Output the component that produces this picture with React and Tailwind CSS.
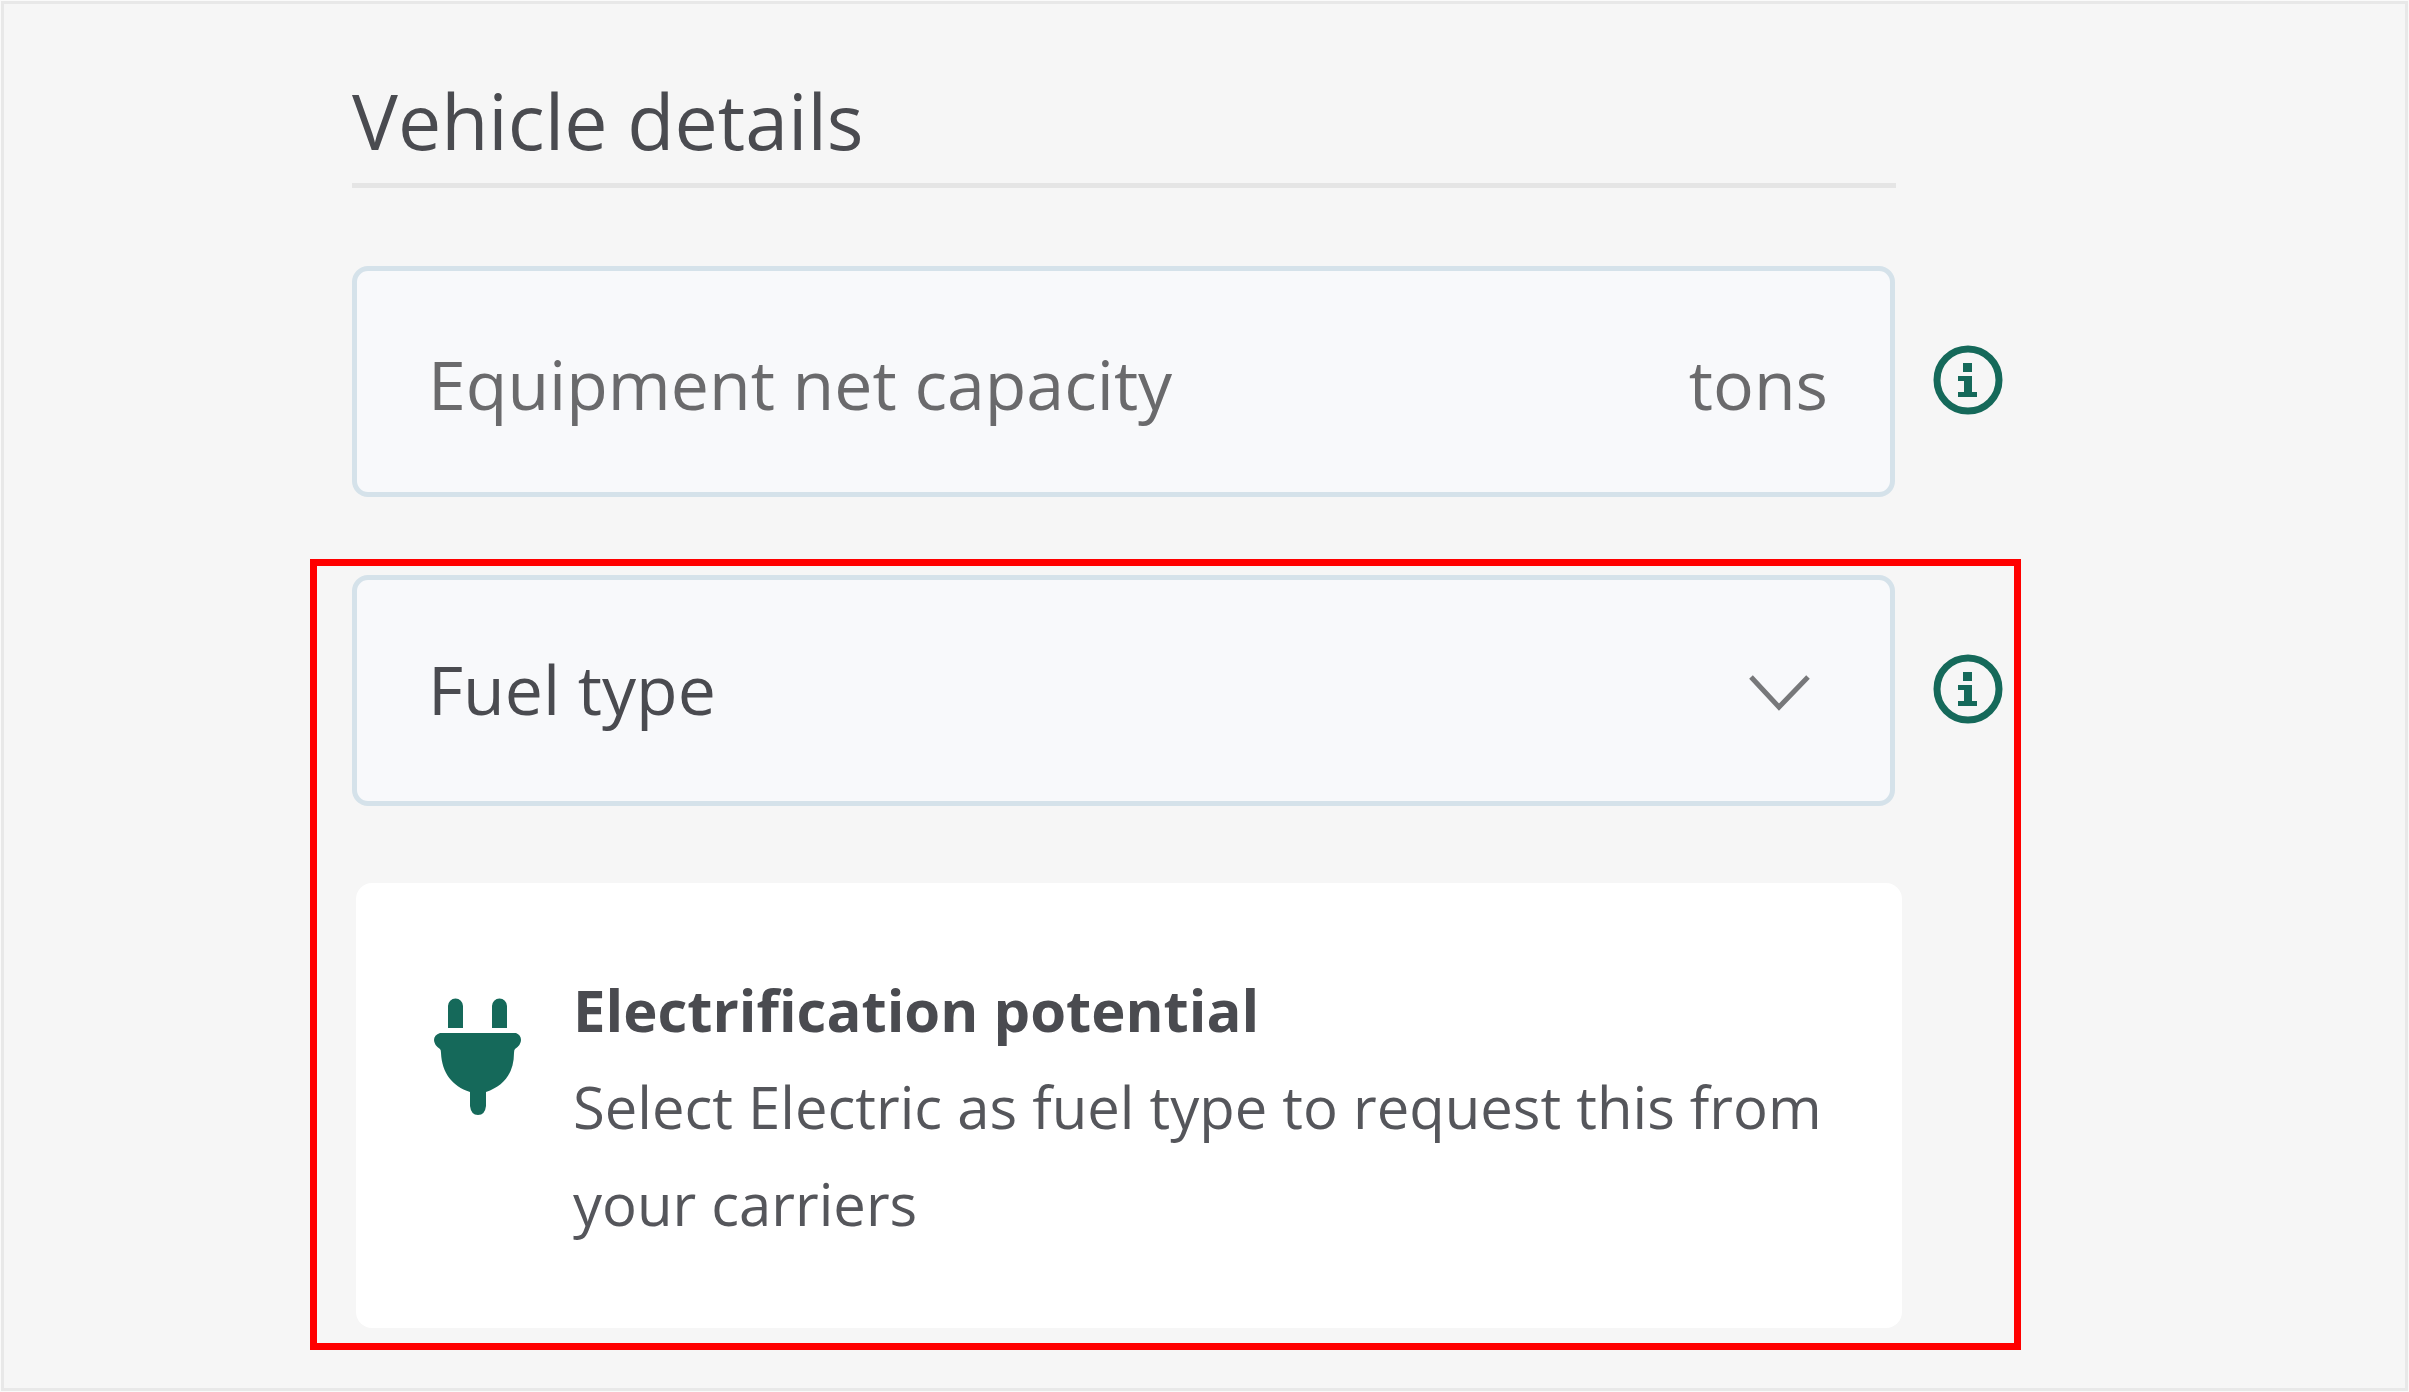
import { useState } from 'react';

const fuelTypes = ['Diesel', 'Electric', 'Hybrid', 'Biodiesel'];

function InfoIcon() {
  return (
    <svg viewBox="0 0 70 70" className="size-[70px]" fill="none" aria-hidden="true">
      <circle cx="35" cy="35" r="31" stroke="#15695a" strokeWidth="7" />
      <path d="M30 18h9v9h-9zM25 31h14v16h5v5H25v-5h6V36h-6z" fill="#15695a" />
    </svg>
  );
}

function PlugIcon() {
  return (
    <svg viewBox="0 0 88 118" className="mt-9 h-[118px] w-[88px] shrink-0" fill="#15695a" aria-hidden="true">
      <path d="M14 31V9a7 7 0 0 1 15 0v22zM58 31V9a7 7 0 0 1 15 0v22z" />
      <path d="M6 36h76q5 2 5 7t-6 9q-1 1-1 4c0 20-10 33-28 39v14q-1 9-8 9t-8-9V95C18 89 8 76 7 56q0-3-1-4-6-4-6-9t6-7z" />
    </svg>
  );
}

function InfoButton({ label }) {
  return (
    <button type="button" aria-label={label} className="shrink-0 pb-1">
      <InfoIcon />
    </button>
  );
}

export default function App() {
  const [capacity, setCapacity] = useState('');
  const [fuel, setFuel] = useState('');

  return (
    <div className="min-h-screen bg-[#fafafa] p-px flex font-['Open_Sans',sans-serif]">
      <main className="flex-1 border-3 border-[#e8e8e8] bg-[#f6f6f6] pt-[68px] pl-[306px] pr-[384px] pb-9">
        <div className="pl-[42px] pr-[125px]">
          <h1 className="border-b-5 border-[#e5e5e5] pt-px pb-[14px] text-[77px] leading-[96px] text-[#4a4b50]">
            Vehicle details
          </h1>
        </div>

        <div className="mt-[78px] flex items-center gap-[38px] pl-[42px] pr-[18px]">
          <div className="flex h-[231px] min-w-0 flex-1 items-center rounded-2xl border-5 border-[#d5e2ea] bg-[#f8f9fb] pt-1 pl-[71px] pr-[62px] text-[68px] leading-[96px] text-[#6a6a6c]">
            <input
              type="text"
              aria-label="Equipment net capacity"
              value={capacity}
              onChange={(e) => setCapacity(e.target.value)}
              placeholder="Equipment net capacity"
              className="h-24 min-w-0 flex-1 bg-transparent outline-none placeholder:text-[#6a6a6c]"
            />
            <span>tons</span>
          </div>
          <InfoButton label="About equipment net capacity" />
        </div>

        <section className="mt-[62px] border-7 border-[#ff0000] pt-[9px] pb-[15px]">
          <div className="flex items-center gap-[38px] pl-[35px] pr-[11px]">
            <div className="relative min-w-0 flex-1">
              <select
                aria-label="Fuel type"
                value={fuel}
                onChange={(e) => setFuel(e.target.value)}
                className="block h-[231px] w-full appearance-none rounded-2xl border-5 border-[#d5e2ea] bg-[#f8f9fb] pb-1 pl-[71px] pr-[160px] text-[68px] leading-[96px] text-[#4a4b50] outline-none"
              >
                <option value="">Fuel type</option>
                {fuelTypes.map((type) => (
                  <option key={type} value={type}>{type}</option>
                ))}
              </select>
              <svg
                viewBox="0 0 62 36"
                className="pointer-events-none absolute right-[85px] top-[100px] h-9 w-[62px]"
                fill="none"
                stroke="#77787a"
                strokeWidth="5"
                aria-hidden="true"
              >
                <path d="M3 2l28 30L60 2" />
              </svg>
            </div>
            <InfoButton label="About fuel type" />
          </div>

          <div className="mt-[77px] ml-[39px] mr-[112px] flex gap-[51px] rounded-2xl bg-white pt-[78px] pb-[76px] pl-[78px] pr-[60px]">
            <PlugIcon />
            <div className="text-[58px] leading-[97px] text-[#55565b]">
              <h2 className="font-bold text-[#4a4b50]">Electrification potential</h2>
              <p>Select Electric as fuel type to request this from your carriers</p>
            </div>
          </div>
        </section>
      </main>
    </div>
  );
}
